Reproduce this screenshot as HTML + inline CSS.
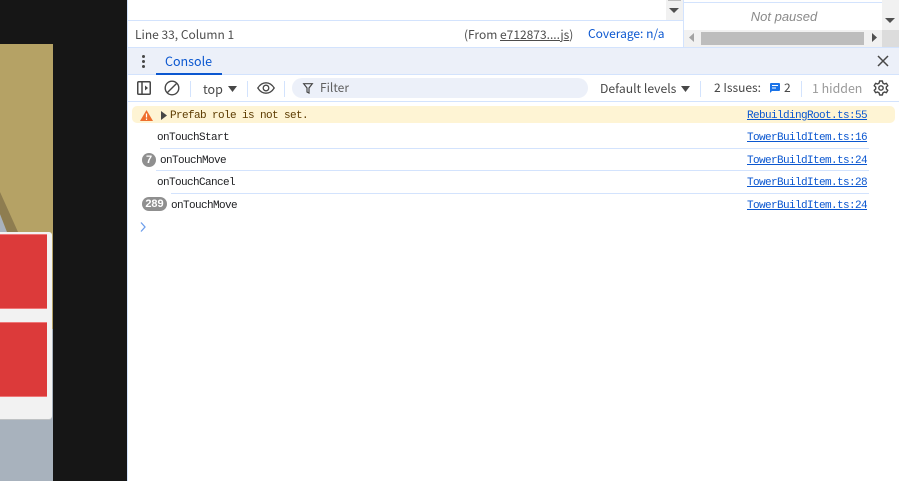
<!DOCTYPE html>
<html><head><meta charset="utf-8">
<style>
html,body{margin:0;padding:0;background:#fff}
#r{position:relative;width:899px;height:481px;overflow:hidden;background:#fff;font-family:"Noto Sans CJK SC","Liberation Sans",sans-serif;font-size:12px;color:#474747}
.a{position:absolute}
.t{position:absolute;white-space:nowrap;line-height:16px}
.m{position:absolute;white-space:nowrap;font-family:"Liberation Mono","Noto Sans CJK SC",monospace;font-size:11px;letter-spacing:-.6px;line-height:14px;color:#202124}
.l{color:#0b57d0;text-decoration:underline}
.ln{position:absolute;height:1px;background:#d3e3fd}
.sep{position:absolute;width:1px;height:16px;top:81px;background:#d3e3fd}
.b{position:absolute;background:#8f8f8f;color:#fff;font-family:"Liberation Sans",sans-serif;font-weight:bold;font-size:11px;line-height:14px;height:14px;text-align:center;border-radius:7px}
svg{position:absolute;overflow:visible}
</style></head><body><div id="r">
<!-- left game area -->
<div class="a" style="left:0;top:0;width:127px;height:481px;background:#161616"></div>
<div class="a" style="left:0;top:44px;width:53px;height:437px;background:#b5a265;overflow:hidden">
  <div class="a" style="left:0;top:285px;width:53px;height:152px;background:#a8b2bd"></div>
  <svg width="53" height="437" style="left:0;top:0"><polygon points="0,170 7,188 0,188" fill="#a8b2bd"/><polygon points="0,148 18,188 7,188 0,170" fill="#8e7d50"/></svg>
  <div class="a" style="left:0;top:188px;width:52px;height:187px;background:#f2f2f2;border-radius:0 3px 3px 0;box-shadow:0 1px 0 #bfc2c4"></div>
  <div class="a" style="left:0;top:190px;width:47px;height:73px;background:#dc3a3a;border:solid #e77;border-width:1px 0"></div>
  <div class="a" style="left:0;top:278px;width:47px;height:73px;background:#dc3a3a;border:solid #e77;border-width:1px 0"></div>
</div>
<div class="a" style="left:127px;top:0;width:1px;height:481px;background:#d3e3fd"></div>

<!-- editor footer -->
<div class="ln" style="left:128px;top:20px;width:555px"></div>
<div class="t" style="left:135px;top:27px;color:#4d4d4d">Line 33, Column 1</div>
<div class="t" style="left:464px;top:27px;color:#4d4d4d">(From <span style="text-decoration:underline">e712873....js</span>)</div>
<div class="t" style="left:588px;top:26px;color:#0b57d0">Coverage: n/a</div>

<!-- small scroll -->
<div class="a" style="left:666px;top:0;width:17px;height:20px;background:#f1f1f1"></div>
<div class="a" style="left:668px;top:0;width:13px;height:1px;background:#bdbdbd"></div>
<svg width="10" height="6" style="left:669px;top:8px"><polygon points="0,0 10,0 5,5" fill="#505050"/></svg>
<div class="a" style="left:683px;top:0;width:1px;height:47px;background:#d3e3fd"></div>

<!-- right panel -->
<div class="ln" style="left:684px;top:2px;width:198px"></div>
<div class="t" style="left:685px;top:9px;width:198px;text-align:center;font-style:italic;color:#8a8a8a;font-family:'Liberation Sans',sans-serif;font-size:13px">Not paused</div>
<div class="a" style="left:882px;top:0;width:17px;height:47px;background:#f1f1f1"></div>
<svg width="10" height="6" style="left:885px;top:18px"><polygon points="0,0 10,0 5,5" fill="#505050"/></svg>
<div class="a" style="left:684px;top:30px;width:198px;height:17px;background:#f1f1f1"></div>
<div class="a" style="left:701px;top:32px;width:163px;height:13px;background:#bdbdbd"></div>
<div class="a" style="left:882px;top:30px;width:17px;height:17px;background:#dcdcdc"></div>
<svg width="6" height="10" style="left:689px;top:33px"><polygon points="5,0 5,9 0,4.5" fill="#a3a3a3"/></svg>
<svg width="6" height="10" style="left:872px;top:33px"><polygon points="0,0 0,9 5,4.5" fill="#505050"/></svg>

<!-- tab bar -->
<div class="a" style="left:128px;top:47px;width:771px;height:1px;background:#d3e3fd"></div>
<div class="a" style="left:128px;top:48px;width:771px;height:26px;background:#ecf0f9"></div>
<div class="a" style="left:128px;top:74px;width:771px;height:1px;background:#d3e3fd"></div>
<div class="a" style="left:156px;top:73px;width:66px;height:2px;background:#0b57d0"></div>
<div class="a" style="left:142px;top:55px;width:3px;height:3px;border-radius:2px;background:#474747;box-shadow:0 5px 0 #474747,0 10px 0 #474747"></div>
<div class="t" style="left:165px;top:53px;color:#0b57d0;font-size:12.5px">Console</div>
<svg width="12" height="12" style="left:877px;top:55px"><path d="M1 1L11 11M11 1L1 11" stroke="#474747" stroke-width="1.5" fill="none"/></svg>

<!-- toolbar -->
<svg width="14" height="14" style="left:137px;top:81px"><rect x=".75" y=".75" width="12.5" height="12.5" rx="1" fill="none" stroke="#474747" stroke-width="1.5"/><path d="M5 1V13" stroke="#474747" stroke-width="1.5"/><polygon points="8,4.5 11,7 8,9.5" fill="#474747"/></svg>
<svg width="16" height="16" style="left:164px;top:80px"><circle cx="8" cy="8" r="6.8" fill="none" stroke="#474747" stroke-width="1.4"/><path d="M3.2 12.8L12.8 3.2" stroke="#474747" stroke-width="1.4"/></svg>
<div class="sep" style="left:190px"></div>
<div class="t" style="left:203px;top:81px;font-size:12.5px">top</div>
<svg width="9" height="6" style="left:228px;top:86px"><polygon points="0,0 9,0 4.5,6" fill="#474747"/></svg>
<div class="sep" style="left:247px"></div>
<svg width="18" height="12" style="left:257px;top:82px"><path d="M.8 6C3 2.5 6 .8 9 .8S15 2.5 17.2 6C15 9.5 12 11.2 9 11.2S3 9.5 .8 6Z" fill="none" stroke="#474747" stroke-width="1.3"/><circle cx="9" cy="6" r="2.8" fill="none" stroke="#474747" stroke-width="1.3"/></svg>
<div class="sep" style="left:284px"></div>
<div class="a" style="left:292px;top:78px;width:296px;height:20px;border-radius:10px;background:#ecf0f9"></div>
<svg width="10" height="11" style="left:303px;top:83px"><path d="M.7 .7H9.3L6 5V10L4 9V5Z" fill="none" stroke="#474747" stroke-width="1.2"/></svg>
<div class="t" style="left:320px;top:80px;font-size:12px;color:#5f5f5f">Filter</div>
<div class="t" style="left:600px;top:80px;font-size:12.2px">Default levels</div>
<svg width="9" height="6" style="left:681px;top:86px"><polygon points="0,0 9,0 4.5,6" fill="#474747"/></svg>
<div class="sep" style="left:700px"></div>
<div class="t" style="left:714px;top:80px">2 Issues:</div>
<svg width="10" height="10" style="left:770px;top:83px"><path d="M0 1a1 1 0 011-1H9a1 1 0 011 1V7a1 1 0 01-1 1H2L0 10Z" fill="#1a73e8"/><path d="M2 2.5H8M2 5H6" stroke="#fff" stroke-width="1"/></svg>
<div class="t" style="left:784px;top:80px">2</div>
<div class="sep" style="left:801px"></div>
<div class="t" style="left:812px;top:80px;color:#9a9a9a;font-size:12.4px">1 hidden</div>
<svg width="16" height="16" viewBox="0 0 16 16" style="left:873px;top:80px"><path d="M6.6 1H9.4L9.8 3L11.5 4L13.4 3.3L14.8 5.7L13.3 7V9L14.8 10.3L13.4 12.7L11.5 12L9.8 13L9.4 15H6.6L6.2 13L4.5 12L2.6 12.7L1.2 10.3L2.7 9V7L1.2 5.7L2.6 3.3L4.5 4L6.2 3Z" fill="none" stroke="#474747" stroke-width="1.4" stroke-linejoin="round"/><circle cx="8" cy="8" r="2.2" fill="none" stroke="#474747" stroke-width="1.4"/></svg>
<div class="a" style="left:128px;top:101px;width:771px;height:1px;background:#d3e3fd"></div>

<!-- warning -->
<div class="a" style="left:132px;top:106px;width:763px;height:17px;border-radius:5px;background:#fef4d4"></div>
<svg width="13" height="11" style="left:140px;top:110px"><path d="M6.5 0L13 11H0Z" fill="#ee6f2e"/><path d="M6.5 3.5V7.5M6.5 8.5V10" stroke="#fff" stroke-width="1.2"/></svg>
<svg width="6" height="9" style="left:161px;top:111px"><polygon points="0,0 6,4.5 0,9" fill="#474747"/></svg>
<div class="m" style="left:170px;top:109px;color:#5c3b00">Prefab role is not set.</div>
<div class="m l" style="left:747px;top:109px">RebuildingRoot.ts:55</div>

<div class="m" style="left:157px;top:131px">onTouchStart</div>
<div class="m l" style="left:747px;top:131px">TowerBuildItem.ts:16</div>
<div class="ln" style="left:160px;top:148px;width:709px"></div>

<div class="b" style="left:142px;top:153px;width:14px">7</div>
<div class="m" style="left:160px;top:154px">onTouchMove</div>
<div class="m l" style="left:747px;top:154px">TowerBuildItem.ts:24</div>
<div class="ln" style="left:156px;top:170px;width:713px"></div>

<div class="m" style="left:157px;top:176px">onTouchCancel</div>
<div class="m l" style="left:747px;top:176px">TowerBuildItem.ts:28</div>
<div class="ln" style="left:171px;top:193px;width:698px"></div>

<div class="b" style="left:142px;top:197px;width:25px">289</div>
<div class="m" style="left:171px;top:199px">onTouchMove</div>
<div class="m l" style="left:747px;top:199px">TowerBuildItem.ts:24</div>

<svg width="6" height="10" style="left:140px;top:222px"><path d="M1 .5L5 5L1 9.5" fill="none" stroke="#6d9eeb" stroke-width="1.3"/></svg>
</div></body></html>
